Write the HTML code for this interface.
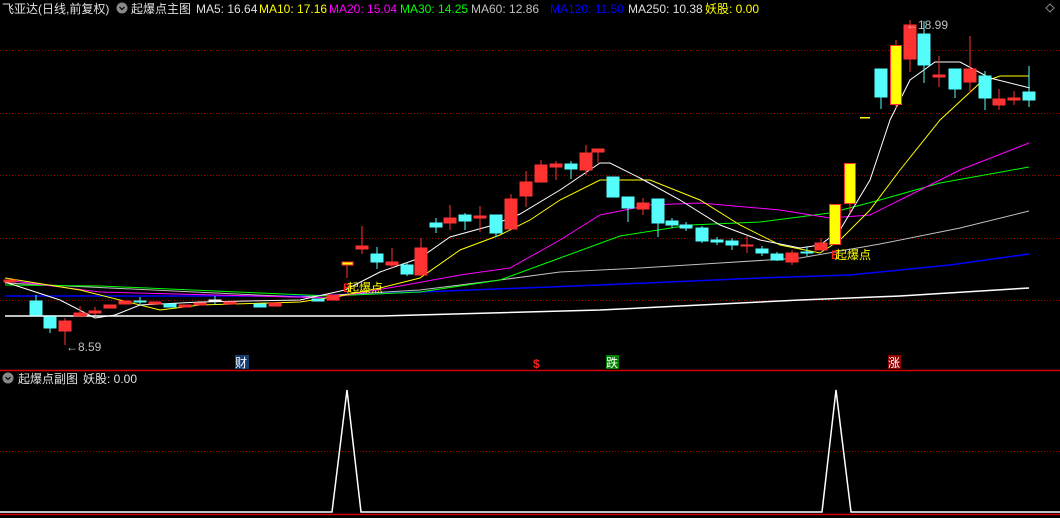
<!DOCTYPE html>
<html><head><meta charset="utf-8"><style>
html,body{margin:0;padding:0;background:#000;width:1060px;height:518px;overflow:hidden}
svg{display:block}
text{font-family:"Liberation Sans","Noto Sans CJK SC",sans-serif;font-size:12px}
</style></head><body>
<svg width="1060" height="518" viewBox="0 0 1060 518" xmlns="http://www.w3.org/2000/svg">
<g stroke="#a00000" stroke-dasharray="1,2" stroke-width="1">
<line x1="0" y1="50.5" x2="1060" y2="50.5"/><line x1="0" y1="113.5" x2="1060" y2="113.5"/>
<line x1="0" y1="175.5" x2="1060" y2="175.5"/><line x1="0" y1="238.5" x2="1060" y2="238.5"/>
<line x1="0" y1="300.5" x2="1060" y2="300.5"/><line x1="0" y1="451.5" x2="1060" y2="451.5"/>
</g>
<line x1="0" y1="370.5" x2="1060" y2="370.5" stroke="#d00000" stroke-width="1.5"/>
<line x1="0" y1="514.5" x2="1060" y2="514.5" stroke="#d00000" stroke-width="1.5"/>

<g fill="none" stroke-width="1">
<polyline stroke="#ffffff" stroke-width="1.5" points="5,316 380,316 600,310 800,300 900,296 1029,288"/>
<polyline stroke="#0000ff" stroke-width="1.5" points="5,296 300,296 420,292 600,285 760,278 850,275 950,265 1029,254"/>
<polyline stroke="#c0c0c0" points="5,283 300,297 420,290 500,280 560,272 640,268 720,263 800,258 880,244 960,228 1029,211"/>
<polyline stroke="#00ff00" points="5,285 100,286 330,296 420,292 500,280 560,258 620,236 690,225 760,222 830,213 880,200 940,183 1029,167"/>
<polyline stroke="#ff00ff" points="5,280 100,292 330,298 400,286 460,275 510,268 560,240 600,215 650,205 700,203 780,210 830,218 870,215 900,200 960,170 1029,143"/>
<polyline stroke="#ffff00" points="5,278 80,290 160,310 200,305 300,302 340,296 380,288 420,278 460,250 500,235 530,220 560,200 600,180 650,180 700,200 740,225 780,245 820,253 840,240 870,210 900,170 940,120 980,83 1000,76 1029,76"/>
<polyline stroke="#ffffff" points="5,282 60,300 95,318 115,315 140,305 200,302 300,300 345,290 380,272 420,258 450,237 490,226 520,214 560,190 600,163 610,163 640,178 680,200 720,225 760,240 800,248 820,245 840,230 870,180 890,120 910,80 935,62 960,62 990,78 1030,88"/>
</g>

<g id="c">
<g stroke="#ff3232" fill="#ff3232">
<line x1="10" y1="279" x2="10" y2="283"/><rect x="4" y="280" width="12" height="2"/>
<line x1="65" y1="318" x2="65" y2="345"/><rect x="59" y="321" width="12" height="10"/>
<line x1="80" y1="306" x2="80" y2="317"/><rect x="74" y="313" width="12" height="3"/>
<line x1="95" y1="307" x2="95" y2="315"/><rect x="89" y="311" width="12" height="2"/>
<rect x="104" y="305" width="12" height="3"/><rect x="119" y="301" width="12" height="3"/>
<rect x="149" y="302" width="12" height="2"/><rect x="179" y="305" width="12" height="2"/>
<rect x="194" y="303" width="12" height="2"/><rect x="224" y="302" width="12" height="2"/>
<rect x="269" y="303" width="12" height="3"/>
<rect x="327" y="295" width="12" height="5"/>
<line x1="362" y1="226" x2="362" y2="254"/><rect x="356" y="246" width="12" height="3"/>
<line x1="392" y1="248" x2="392" y2="268"/><rect x="386" y="262" width="12" height="3"/>
<line x1="421" y1="238" x2="421" y2="275"/><rect x="415" y="248" width="12" height="27"/>
<line x1="450" y1="205" x2="450" y2="230"/><rect x="444" y="218" width="12" height="5"/>
<line x1="480" y1="206" x2="480" y2="232"/><rect x="474" y="216" width="12" height="2"/>
<line x1="511" y1="194" x2="511" y2="229"/><rect x="505" y="199" width="12" height="30"/>
<line x1="526" y1="171" x2="526" y2="207"/><rect x="520" y="182" width="12" height="14"/>
<line x1="541" y1="160" x2="541" y2="182"/><rect x="535" y="165" width="12" height="17"/>
<line x1="556" y1="161" x2="556" y2="180"/><rect x="550" y="164" width="12" height="3"/>
<line x1="586" y1="145" x2="586" y2="175"/><rect x="580" y="153" width="12" height="17"/>
<line x1="598" y1="149" x2="598" y2="163"/><rect x="592" y="149" width="12" height="3"/>
<line x1="643" y1="198" x2="643" y2="215"/><rect x="637" y="203" width="12" height="6"/>
<line x1="747" y1="236" x2="747" y2="253"/><rect x="741" y="245" width="12" height="1"/>
<line x1="792" y1="250" x2="792" y2="265"/><rect x="786" y="253" width="12" height="9"/>
<line x1="821" y1="238" x2="821" y2="250"/><rect x="815" y="243" width="12" height="7"/>
<line x1="910" y1="20" x2="910" y2="72"/><rect x="904" y="25" width="12" height="34"/>
<line x1="939" y1="56" x2="939" y2="87"/><rect x="933" y="75" width="12" height="2"/>
<line x1="970" y1="36" x2="970" y2="93"/><rect x="964" y="69" width="12" height="13"/>
<line x1="999" y1="89" x2="999" y2="110"/><rect x="993" y="99" width="12" height="6"/>
<line x1="1014" y1="91" x2="1014" y2="105"/><rect x="1008" y="98" width="12" height="2"/>
</g>
<g stroke="#54fcfc" fill="#54fcfc">
<line x1="36" y1="295" x2="36" y2="315"/><rect x="30" y="301" width="12" height="14"/>
<line x1="50" y1="315" x2="50" y2="333"/><rect x="44" y="317" width="12" height="11"/>
<line x1="140" y1="297" x2="140" y2="306"/><rect x="134" y="301" width="12" height="1"/>
<rect x="164" y="304" width="12" height="3"/>
<line x1="215" y1="296" x2="215" y2="305"/><rect x="209" y="300" width="12" height="1" fill="#fff" stroke="#fff"/>
<rect x="254" y="304" width="12" height="3"/>
<rect x="312" y="299" width="12" height="2"/>
<line x1="377" y1="247" x2="377" y2="269"/><rect x="371" y="254" width="12" height="8"/>
<line x1="407" y1="262" x2="407" y2="276"/><rect x="401" y="265" width="12" height="9"/>
<line x1="436" y1="218" x2="436" y2="233"/><rect x="430" y="223" width="12" height="4"/>
<line x1="465" y1="213" x2="465" y2="230"/><rect x="459" y="215" width="12" height="6"/>
<line x1="496" y1="215" x2="496" y2="237"/><rect x="490" y="215" width="12" height="18"/>
<line x1="571" y1="161" x2="571" y2="179"/><rect x="565" y="164" width="12" height="5"/>
<line x1="613" y1="177" x2="613" y2="197"/><rect x="607" y="177" width="12" height="20"/>
<line x1="628" y1="197" x2="628" y2="222"/><rect x="622" y="197" width="12" height="11"/>
<line x1="658" y1="199" x2="658" y2="237"/><rect x="652" y="199" width="12" height="24"/>
<line x1="672" y1="218" x2="672" y2="228"/><rect x="666" y="221" width="12" height="4"/>
<line x1="686" y1="222" x2="686" y2="231"/><rect x="680" y="225" width="12" height="3"/>
<line x1="702" y1="226" x2="702" y2="243"/><rect x="696" y="228" width="12" height="13"/>
<line x1="717" y1="237" x2="717" y2="245"/><rect x="711" y="240" width="12" height="2"/>
<line x1="732" y1="238" x2="732" y2="250"/><rect x="726" y="241" width="12" height="4"/>
<line x1="762" y1="246" x2="762" y2="256"/><rect x="756" y="249" width="12" height="4"/>
<line x1="777" y1="252" x2="777" y2="261"/><rect x="771" y="254" width="12" height="6"/>
<line x1="807" y1="247" x2="807" y2="256"/><rect x="801" y="252" width="12" height="1"/>
<line x1="881" y1="69" x2="881" y2="109"/><rect x="875" y="69" width="12" height="28"/>
<line x1="924" y1="21" x2="924" y2="83"/><rect x="918" y="34" width="12" height="31"/>
<line x1="955" y1="69" x2="955" y2="98"/><rect x="949" y="69" width="12" height="20"/>
<line x1="985" y1="71" x2="985" y2="110"/><rect x="979" y="76" width="12" height="22"/>
<line x1="1029" y1="66" x2="1029" y2="107"/><rect x="1023" y="92" width="12" height="8"/>
</g>
<g>
<line x1="347" y1="263" x2="347" y2="278" stroke="#ff3232"/>
<rect x="342" y="262" width="11" height="3" fill="#ffff00" stroke="#ff3232"/>
<rect x="829.5" y="204.5" width="11" height="40" fill="#ffff00" stroke="#ff3232"/>
<line x1="850" y1="203" x2="850" y2="213" stroke="#ff3232"/>
<rect x="844.5" y="163.5" width="11" height="40" fill="#ffff00" stroke="#ff3232"/>
<rect x="860" y="117" width="10" height="1.5" fill="#ffff00"/>
<line x1="896" y1="40" x2="896" y2="108" stroke="#ff3232"/>
<rect x="890.5" y="45.5" width="11" height="59" fill="#ffff00" stroke="#ff3232"/>
</g>
</g>

<text x="343" y="292" fill="#ff2020" font-weight="bold">B</text>
<text x="347" y="292" fill="#ffff00" font-size="13">起爆点</text>
<text x="831" y="259" fill="#ff2020" font-weight="bold">B</text>
<text x="835" y="259" fill="#ffff00" font-size="13">起爆点</text>
<text x="66" y="351" fill="#c0c0c0">←8.59</text>
<text x="906" y="29" fill="#c0c0c0">←18.99</text>

<rect x="235" y="355" width="14" height="14" fill="#143c6e"/>
<text x="235" y="367" fill="#fff">财</text>
<text x="533" y="368" fill="#ff2020" font-weight="bold">$</text>
<rect x="606" y="355" width="13" height="14" fill="#008000"/>
<text x="606" y="367" fill="#fff">跌</text>
<rect x="888" y="355" width="13" height="14" fill="#900000"/>
<text x="888" y="367" fill="#fff">涨</text>

<text x="2" y="13" fill="#e0e0e0">飞亚达(日线,前复权)</text>
<circle cx="122" cy="8" r="5.5" fill="#888"/>
<path d="M119.5,7 L122,9.5 L124.5,7" stroke="#000" fill="none" stroke-width="1.2"/>
<text x="131" y="13" fill="#e0e0e0">起爆点主图</text>
<text x="196" y="13" fill="#e0e0e0">MA5: 16.64</text>
<text x="259" y="13" fill="#ffff00">MA10: 17.16</text>
<text x="329" y="13" fill="#ff00ff">MA20: 15.04</text>
<text x="400" y="13" fill="#00ff00">MA30: 14.25</text>
<text x="471" y="13" fill="#c0c0c0">MA60: 12.86</text>
<text x="550" y="13" fill="#0000ff">MA120: 11.50</text>
<text x="628" y="13" fill="#e0e0e0">MA250: 10.38</text>
<text x="705" y="13" fill="#ffff00">妖股: 0.00</text>
<path d="M1050,4 L1054,8 L1050,12 L1046,8 Z" stroke="#888" fill="none"/>

<circle cx="8" cy="378" r="5.5" fill="#888"/>
<path d="M5.5,377 L8,379.5 L10.5,377" stroke="#000" fill="none" stroke-width="1.2"/>
<text x="18" y="383" fill="#e0e0e0">起爆点副图</text>
<text x="83" y="383" fill="#e0e0e0">妖股: 0.00</text>

<polyline fill="none" stroke="#fff" stroke-width="1.5" points="0,512 332,512 347,390 361,512 822,512 836,390 851,512 1060,512"/>
</svg>
</body></html>
